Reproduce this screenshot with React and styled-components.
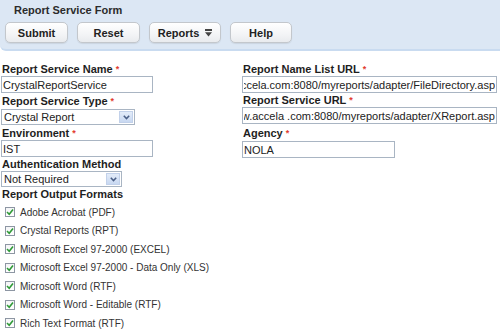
import React from "react"
import styled, {createGlobalStyle} from "styled-components"

const GlobalStyle = createGlobalStyle`
  html, body {
    margin: 0;
    padding: 0;
    background: #fff;
    overflow: hidden;
  }
  body {
    font-family: "Liberation Sans", Arial, sans-serif;
    font-size: 11px;
    color: #222;
  }
`

const Page = styled.div`
  width: 500px;
  height: 329px;
  overflow: hidden;
`

const Toolbar = styled.div`
  height: 51px;
  box-sizing: border-box;
  background: #dce7f4;
  border-bottom: 2px solid #c9dbf0;
  border-bottom-left-radius: 6px;
  padding: 3px 0 0 5px;
`

const Title = styled.div`
  font-weight: bold;
  font-size: 11px;
  line-height: 14px;
  color: #2b2b2b;
  padding-left: 9px;
`

const ButtonRow = styled.div`
  display: flex;
  gap: 9px;
  margin-top: 5px;
`

const Button = styled.div`
  width: ${props => props.w || 63}px;
  height: 21px;
  box-sizing: border-box;
  border: 1px solid #c3c7cc;
  border-radius: 5px;
  background: linear-gradient(#ffffff, #f3f4f6 60%, #e9ebee);
  box-shadow: 0 1px 1px rgba(0, 0, 0, 0.08);
  display: flex;
  align-items: center;
  justify-content: center;
  gap: 6px;
  font-weight: bold;
  font-size: 11px;
  color: #222;
`

const Form = styled.div`
  display: grid;
  grid-template-columns: 242px 1fr;
  padding-top: 11px;
`

const Column = styled.div`
  display: flex;
  flex-direction: column;
  padding-left: ${props => props.pl ?? 1}px;
`

const Label = styled.div`
  font-weight: bold;
  font-size: 11px;
  line-height: 14px;
  height: 14px;
  color: #1e1e1e;
  padding-left: 1px;
  margin-top: ${props => props.mt || 0}px;
`

const Req = styled.span`
  color: #e23b2e;
  font-size: 9px;
  margin-left: 3px;
  position: relative;
  top: -1px;
`

const Input = styled.input`
  display: block;
  width: ${props => props.w}px;
  height: 17px;
  box-sizing: border-box;
  border: 1px solid #a9b5c3;
  padding: 0 1px;
  margin: ${props => props.mt || 0}px 0 0 0;
  font-family: "Liberation Sans", Arial, sans-serif;
  font-size: 11px;
  color: #222;
  outline: none;
  background: #fff;
  direction: ${props => (props.tail ? "rtl" : "ltr")};
`

const Select = styled.div`
  width: ${props => props.w}px;
  height: 16px;
  box-sizing: border-box;
  border: 1px solid #a9b5c3;
  margin-top: ${props => props.mt ?? 1}px;
  display: flex;
  align-items: center;
  justify-content: space-between;
  padding-left: 2px;
  font-size: 11px;
  color: #222;
  background: #fff;
`

const SelectArrow = styled.div`
  width: 14px;
  height: 12px;
  margin-right: 1px;
  background: linear-gradient(#e3ecf9, #c8d8f1);
  border: 1px solid #c2d1ea;
  box-sizing: border-box;
  display: flex;
  align-items: center;
  justify-content: center;
`

const CheckList = styled.div`
  display: flex;
  flex-direction: column;
  margin-top: 2px;
`

const CheckRow = styled.div`
  display: flex;
  align-items: center;
  height: 18.5px;
  padding-left: 4px;
  gap: 5px;
  font-size: 10px;
  color: #333;
  white-space: nowrap;
`

const Box = styled.span`
  width: 10px;
  height: 10px;
  box-sizing: border-box;
  border: 1px solid #8d96a3;
  background: linear-gradient(#f4f5f7, #ffffff);
  display: flex;
  align-items: center;
  justify-content: center;
`

const Chevron = () => (
  <svg width="7" height="5" viewBox="0 0 7 5">
    <path d="M0.8 0.8 L3.5 3.6 L6.2 0.8" fill="none" stroke="#4a5f86" strokeWidth="1.5" />
  </svg>
)

const MenuGlyph = () => (
  <svg width="7" height="8" viewBox="0 0 7 8">
    <rect x="0" y="0" width="7" height="2" fill="#444" />
    <path d="M0 3.2 H7 L3.5 7.5 Z" fill="#444" />
  </svg>
)

const Check = () => (
  <svg width="8" height="8" viewBox="0 0 8 8">
    <path d="M1 4 L3.2 6.2 L7 1.5" fill="none" stroke="#2f9a37" strokeWidth="1.6" />
  </svg>
)

const formats = [
  "Adobe Acrobat (PDF)",
  "Crystal Reports (RPT)",
  "Microsoft Excel 97-2000 (EXCEL)",
  "Microsoft Excel 97-2000 - Data Only (XLS)",
  "Microsoft Word (RTF)",
  "Microsoft Word - Editable (RTF)",
  "Rich Text Format (RTF)",
]

export default function App() {
  return (
    <Page>
      <GlobalStyle />
      <Toolbar>
        <Title>Report Service Form</Title>
        <ButtonRow>
          <Button>Submit</Button>
          <Button>Reset</Button>
          <Button w={72}>
            Reports <MenuGlyph />
          </Button>
          <Button w={62}>Help</Button>
        </ButtonRow>
      </Toolbar>
      <Form>
        <Column>
          <Label>
            Report Service Name<Req>*</Req>
          </Label>
          <Input w={152} value="CrystalReportService" readOnly />
          <Label mt={1}>
            Report Service Type<Req>*</Req>
          </Label>
          <Select w={134}>
            Crystal Report
            <SelectArrow>
              <Chevron />
            </SelectArrow>
          </Select>
          <Label mt={1}>
            Environment<Req>*</Req>
          </Label>
          <Input w={152} value="IST" readOnly />
          <Label>Authentication Method</Label>
          <Select w={121} mt={0}>
            Not Required
            <SelectArrow>
              <Chevron />
            </SelectArrow>
          </Select>
          <Label>Report Output Formats</Label>
          <CheckList>
            {formats.map(f => (
              <CheckRow key={f}>
                <Box>
                  <Check />
                </Box>
                {f}
              </CheckRow>
            ))}
          </CheckList>
        </Column>
        <Column pl={0}>
          <Label>
            Report Name List URL<Req>*</Req>
          </Label>
          <Input w={255} tail value="ccela.com:8080/myreports/adapter/FileDirectory.asp" readOnly />
          <Label>
            Report Service URL<Req>*</Req>
          </Label>
          <Input w={255} tail value="w.accela .com:8080/myreports/adapter/XReport.asp" readOnly />
          <Label mt={2}>
            Agency<Req>*</Req>
          </Label>
          <Input w={153} mt={1} value="NOLA" readOnly />
        </Column>
      </Form>
    </Page>
  )
}
